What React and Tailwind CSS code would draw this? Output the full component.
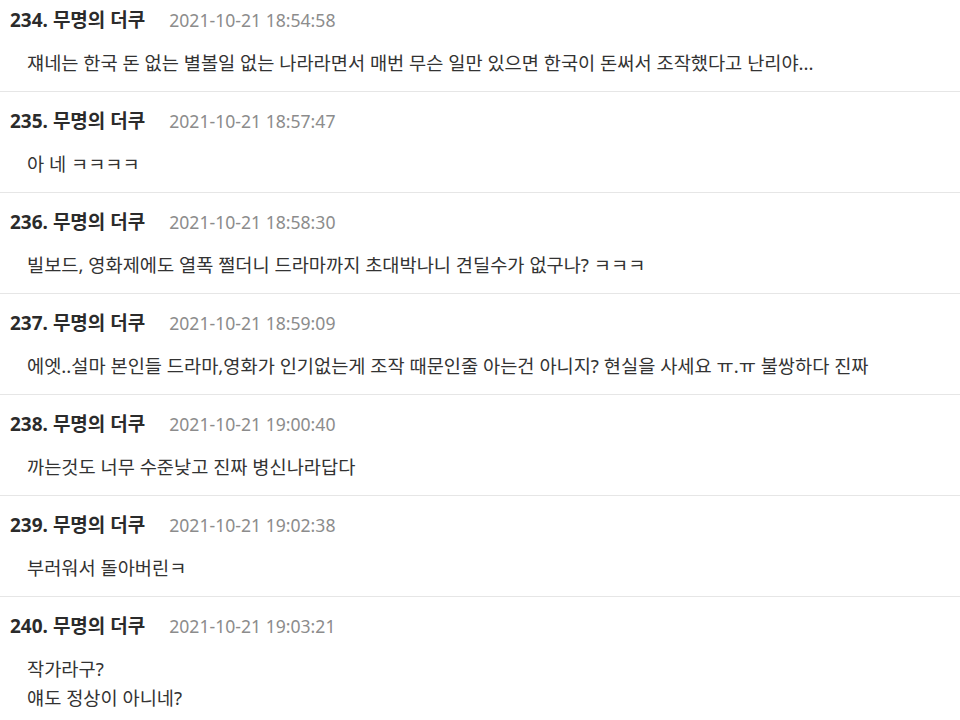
const comments = [
  { no: 234, date: "2021-10-21 18:54:58", lines: ["쟤네는 한국 돈 없는 별볼일 없는 나라라면서 매번 무슨 일만 있으면 한국이 돈써서 조작했다고 난리야..."] },
  { no: 235, date: "2021-10-21 18:57:47", lines: ["아 네 ㅋㅋㅋㅋ"] },
  { no: 236, date: "2021-10-21 18:58:30", lines: ["빌보드, 영화제에도 열폭 쩔더니 드라마까지 초대박나니 견딜수가 없구나? ㅋㅋㅋ"] },
  { no: 237, date: "2021-10-21 18:59:09", lines: ["에엣..설마 본인들 드라마,영화가 인기없는게 조작 때문인줄 아는건 아니지? 현실을 사세요 ㅠ.ㅠ 불쌍하다 진짜"] },
  { no: 238, date: "2021-10-21 19:00:40", lines: ["까는것도 너무 수준낮고 진짜 병신나라답다"] },
  { no: 239, date: "2021-10-21 19:02:38", lines: ["부러워서 돌아버린ㅋ"] },
  { no: 240, date: "2021-10-21 19:03:21", lines: ["작가라구?", "얘도 정상이 아니네?"] },
];

function Comment({ no, date, lines }) {
  return (
    <li className="border-t border-[#e6e6e6] pt-[17px] pb-[14px]">
      <div className="flex items-center h-6 pl-[10px] whitespace-nowrap">
        <span className="text-[19px] font-bold text-[#2b2b2b]">{no}. 무명의 더쿠</span>
        <span className="ml-6 text-[17.6px] text-[#8c8c8c]">{date}</span>
      </div>
      <div className="mt-4 pl-[27px] text-[18.67px] leading-[29px] text-[#333] whitespace-nowrap">
        {lines.map((line, i) => (
          <p key={i}>{line}</p>
        ))}
      </div>
    </li>
  );
}

export default function App() {
  return (
    <div
      className="h-[720px] w-[960px] overflow-hidden bg-white"
      style={{ fontFamily: '"Noto Sans", "Noto Sans CJK KR", sans-serif' }}
    >
      <ul className="-mt-[10px]">
        {comments.map((c) => (
          <Comment key={c.no} {...c} />
        ))}
      </ul>
    </div>
  );
}
